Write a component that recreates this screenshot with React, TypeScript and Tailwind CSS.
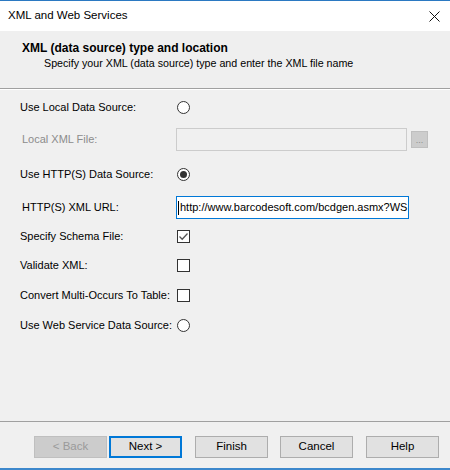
import React from 'react';

const font = { fontFamily: '"Liberation Sans", Arial, sans-serif' };

function Radio({ checked }: { checked?: boolean }) {
  return (
    <span className="flex h-[13px] w-[13px] items-center justify-center rounded-full border border-[#333333] bg-white">
      {checked && <span className="h-[7px] w-[7px] rounded-full bg-[#333333]" />}
    </span>
  );
}

function Checkbox({ checked }: { checked?: boolean }) {
  return (
    <span className="flex h-[13px] w-[13px] items-center justify-center border border-[#333333] bg-white">
      {checked && (
        <svg width="11" height="11" viewBox="0 0 11 11" fill="none">
          <path d="M1.5 5.5 L4.2 8.2 L9.5 2.5" stroke="#555" strokeWidth="1.3" />
        </svg>
      )}
    </span>
  );
}

function Row({ label, className, labelClass, children }: { label: string; className: string; labelClass?: string; children: React.ReactNode }) {
  return (
    <div className={`flex h-[23px] items-center ${className}`}>
      <div className={`w-[176px] shrink-0 whitespace-nowrap ${labelClass ?? 'pl-[20px] text-black'}`}>{label}</div>
      <div className="flex flex-1 items-center">{children}</div>
    </div>
  );
}

function DialogButton({ label, variant }: { label: string; variant?: 'disabled' | 'default' }) {
  const cls =
    variant === 'disabled'
      ? 'bg-[#cccccc] border border-[#bfbfbf] text-[#9a9a9a]'
      : variant === 'default'
      ? 'bg-[#e1e1e1] border-2 border-[#0078d7] text-black'
      : 'bg-[#e1e1e1] border border-[#adadad] text-black';
  return (
    <div className={`flex h-[22px] w-[73px] items-center justify-center text-[11.5px] ${cls}`}>{label}</div>
  );
}

export default function App() {
  return (
    <div className="flex h-[470px] w-[450px] flex-col overflow-hidden bg-[#f0f0f0] text-[11px]" style={font}>
      {/* window frame top edge */}
      <div className="h-px bg-[#2b79c2]" />

      {/* title bar */}
      <div className="flex h-[30px] items-center justify-between bg-white pl-[8px] pr-[10px]">
        <span className="text-[11.5px] text-black">XML and Web Services</span>
        <svg width="11" height="11" viewBox="0 0 11 11">
          <path d="M0.5 0.5 L10.5 10.5 M10.5 0.5 L0.5 10.5" stroke="#111" strokeWidth="1" />
        </svg>
      </div>

      {/* wizard header */}
      <div className="h-[58px] border-b border-[#a0a0a0] bg-[#efefef] pl-[22px] pt-[10px] leading-[14px]">
        <div className="text-[12px] font-bold text-black">XML (data source) type and location</div>
        <div className="mt-[1px] pl-[22px] text-[10.7px] text-black">Specify your XML (data source) type and enter the XML file name</div>
      </div>
      <div className="h-px bg-white" />

      {/* options */}
      <div className="flex flex-1 flex-col">
        <Row label="Use Local Data Source:" className="mt-[6px]">
          <span className="ml-px">
            <Radio />
          </span>
        </Row>
        <Row label="Local XML File:" className="mt-[9px]" labelClass="pl-[22px] text-[#8c8c8c]">
          <div className="h-[23px] w-[231px] border border-[#cccccc] bg-[#f0f0f0]" />
          <div className="ml-[4px] flex h-[17px] w-[17px] items-end justify-center border border-[#bfbfbf] bg-[#cccccc] pb-[2px] text-[9px] leading-[9px] text-[#8c8c8c]">
            ...
          </div>
        </Row>
        <Row label="Use HTTP(S) Data Source:" className="mt-[12px]">
          <span className="ml-px">
            <Radio checked />
          </span>
        </Row>
        <Row label="HTTP(S) XML URL:" className="mt-[10px]" labelClass="pl-[22px] text-black">
          <div className="flex h-[23px] w-[233px] items-center overflow-hidden whitespace-nowrap border border-[#0078d7] bg-white pl-[1px]">
            <span className="mr-px h-[14px] w-px shrink-0 bg-black" />
            <span>http://www.barcodesoft.com/bcdgen.asmx?WS</span>
          </div>
        </Row>
        <Row label="Specify Schema File:" className="mt-[6px]">
          <span className="ml-px">
            <Checkbox checked />
          </span>
        </Row>
        <Row label="Validate XML:" className="mt-[6px]">
          <span className="ml-px">
            <Checkbox />
          </span>
        </Row>
        <Row label="Convert Multi-Occurs To Table:" className="mt-[7px]">
          <span className="ml-px">
            <Checkbox />
          </span>
        </Row>
        <Row label="Use Web Service Data Source:" className="mt-[7px]">
          <span className="ml-px">
            <Radio />
          </span>
        </Row>
      </div>

      {/* footer buttons */}
      <div className="border-t border-[#a0a0a0]">
        <div className="flex h-[46px] items-start pl-[34px] pt-[14px]">
          <DialogButton label="< Back" variant="disabled" />
          <div className="ml-[2px]">
            <DialogButton label="Next >" variant="default" />
          </div>
          <div className="ml-[13px]">
            <DialogButton label="Finish" />
          </div>
          <div className="ml-[12px]">
            <DialogButton label="Cancel" />
          </div>
          <div className="ml-[13px]">
            <DialogButton label="Help" />
          </div>
        </div>
      </div>
      <div className="h-[2px] bg-[#3d88cc]" />
    </div>
  );
}
